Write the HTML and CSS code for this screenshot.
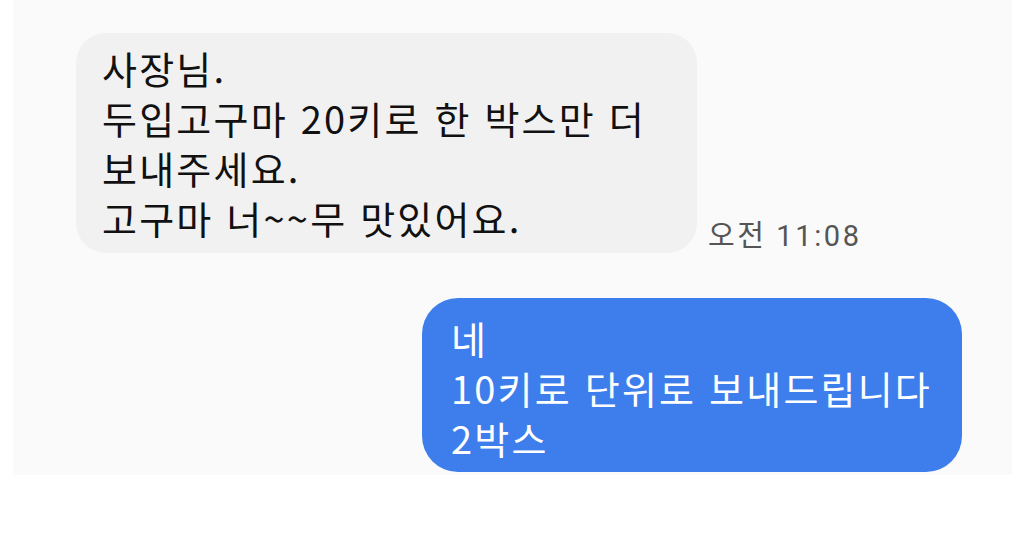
FILE: index.html
```html
<!DOCTYPE html>
<html lang="ko">
<head>
<meta charset="utf-8">
<link rel="stylesheet" href="styles.css">
</head>
<body>
<div class="panel">
  <div class="row row-in">
    <div class="bubble bubble-in">사장님.<br>두입고구마 20키로 한 박스만 더<br>보내주세요.<br>고구마 너~~무 맛있어요.</div>
    <div class="time">오전 11:08</div>
  </div>
  <div class="row row-out">
    <div class="bubble bubble-out">네<br>10키로 단위로 보내드립니다<br>2박스</div>
  </div>
</div>
</body>
</html>
```
FILE: styles.css
```css
html, body {
  margin: 0;
  padding: 0;
  background: #ffffff;
}
body {
  font-family: "Noto Sans CJK KR", "Noto Sans", sans-serif;
  width: 1024px;
  height: 558px;
  overflow: hidden;
}
.panel {
  margin: 0 12px 0 13px;
  height: 475px;
  background: #fafafa;
  padding-top: 33px;
  box-sizing: border-box;
}
.row {
  display: flex;
  align-items: flex-end;
}
.row-in {
  padding-left: 63px;
}
.row-out {
  justify-content: flex-end;
  padding-right: 50px;
  margin-top: 45px;
}
.bubble {
  font-size: 38px;
  line-height: 50px;
  letter-spacing: 2.2px;
  box-sizing: border-box;
  white-space: nowrap;
}
.bubble-in {
  width: 621px;
  background: #f1f1f1;
  color: #111111;
  border-radius: 30px;
  padding: 10px 20px 10px 26px;
}
.bubble-out {
  width: 540px;
  background: #3d7eec;
  color: #ffffff;
  border-radius: 36px;
  padding: 15px 16px 9px 29px;
}
.time {
  font-family: Roboto, "Noto Sans CJK KR", sans-serif;
  font-size: 29px;
  letter-spacing: 2.6px;
  color: #555555;
  margin-left: 11px;
  line-height: 34px;
}
```
